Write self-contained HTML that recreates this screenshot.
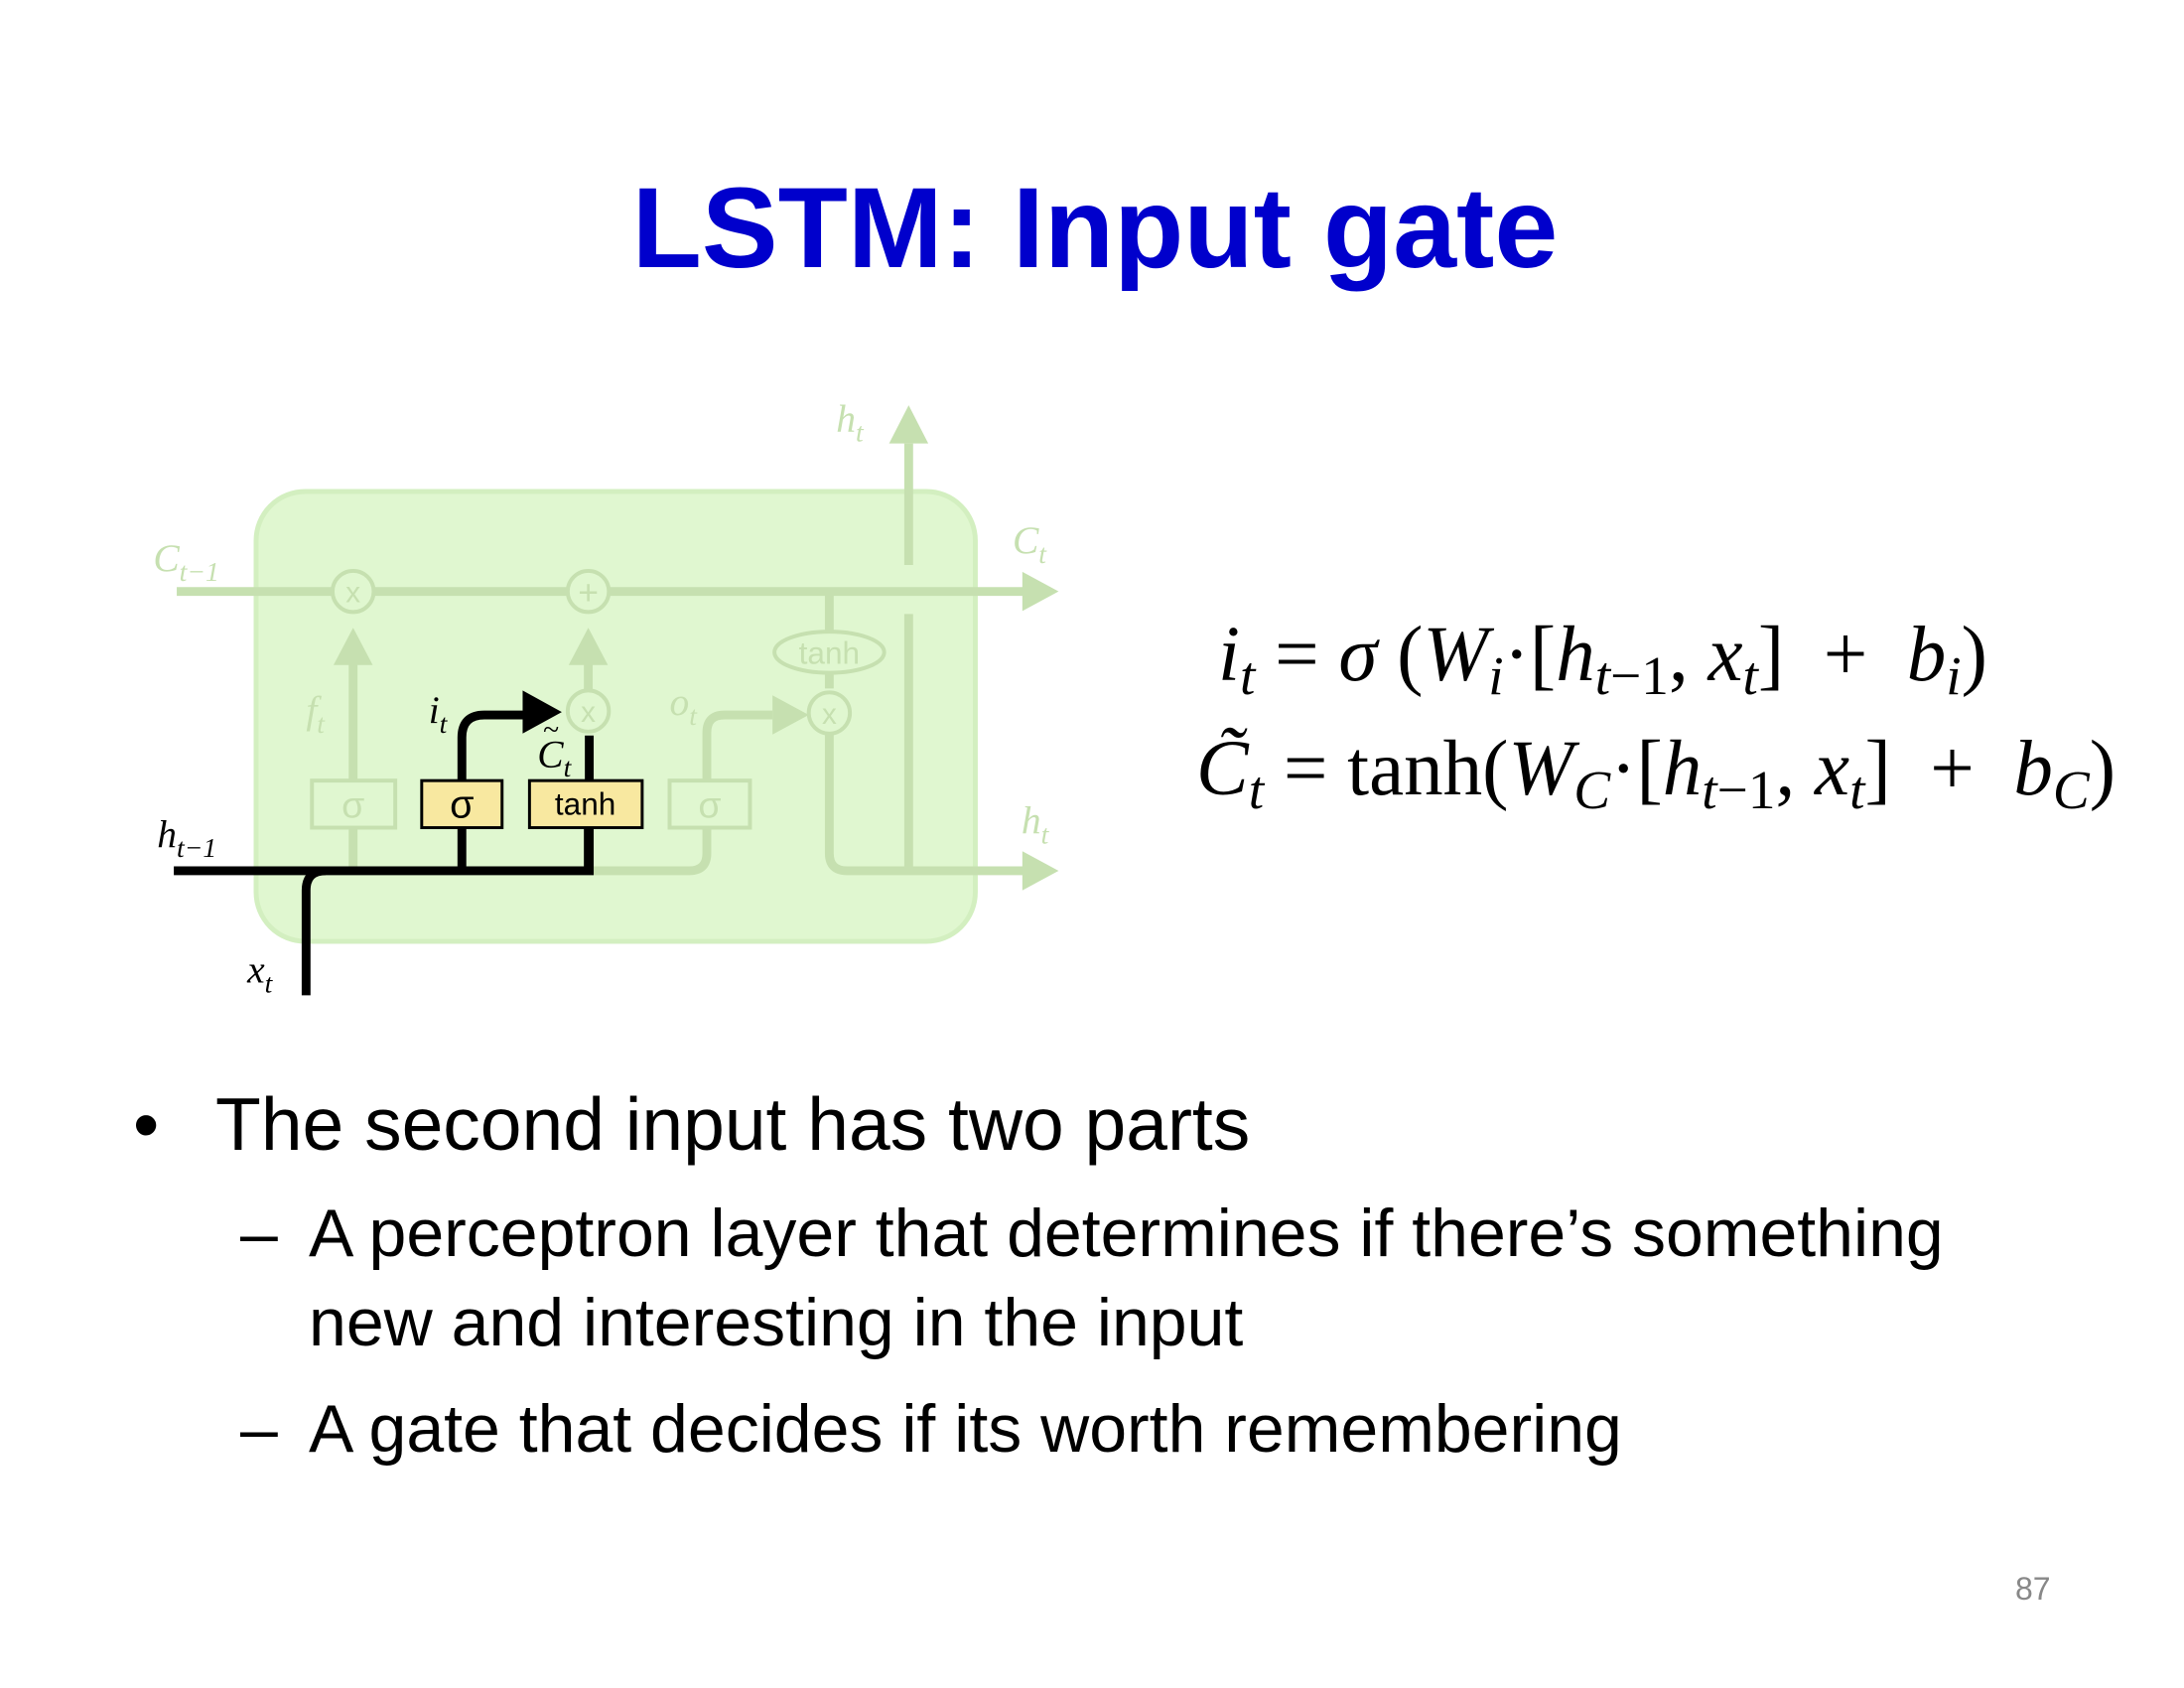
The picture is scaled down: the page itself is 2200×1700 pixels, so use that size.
<!DOCTYPE html>
<html><head><meta charset="utf-8"><style>
html,body{margin:0;padding:0;background:#fff;}
body{width:2200px;height:1700px;position:relative;overflow:hidden;font-family:"Liberation Sans",sans-serif;}
.t{position:absolute;white-space:nowrap;}
.title{left:0;width:2206px;text-align:center;top:173px;font-size:115px;font-weight:bold;color:#0000cc;line-height:1;}
.b{font-size:75px;color:#000;line-height:1;}
.s{font-size:68px;color:#000;line-height:1;}
.m{font-family:"Liberation Serif",serif;font-size:79px;line-height:1;color:#000;}
.m i{font-style:italic;}
.m sub{font-size:0.7em;vertical-align:-0.25em;line-height:0;}
</style></head><body>
<div class="t title">LSTM: Input gate</div>

<svg width="2200" height="1700" style="position:absolute;left:0;top:0" viewBox="0 0 2200 1700">
<g transform="translate(258,495) scale(0.987) translate(-258,-499)">
<rect x="258" y="499" width="734" height="459" rx="50" fill="#e0f7d0" stroke="#d3efc0" stroke-width="5"/>
<g stroke="#c6e0b0" stroke-width="9" fill="none">
<line x1="177" y1="601" x2="1045" y2="601"/>
<line x1="924" y1="574" x2="924" y2="450"/>
<line x1="843" y1="601" x2="843" y2="700"/>
<line x1="357" y1="794" x2="357" y2="670"/>
<line x1="597" y1="702" x2="597" y2="670"/>
<line x1="357" y1="842" x2="357" y2="886"/>
<path d="M598 886 H700 Q718 886 718 868 V842 M718 794 V745 Q718 727 736 727 H785"/>
<path d="M843 746 V868 Q843 886 861 886 H1045"/>
<line x1="924" y1="624" x2="924" y2="886"/>
<circle cx="357" cy="601" r="21" stroke-width="4" fill="#e0f7d0"/>
<circle cx="597" cy="601" r="21" stroke-width="4" fill="#e0f7d0"/>
<circle cx="597" cy="723" r="21" stroke-width="4" fill="#e0f7d0"/>
<circle cx="843" cy="725" r="21" stroke-width="4" fill="#e0f7d0"/>
<ellipse cx="843" cy="663" rx="56" ry="21" stroke-width="4" fill="#e0f7d0"/>
<rect x="315" y="794" width="85" height="48" stroke-width="4" fill="#e0f7d0"/>
<rect x="680" y="794" width="82" height="48" stroke-width="4" fill="#e0f7d0"/>
</g>
<g fill="#c6e0b0">
<polygon points="1077,601 1040,581 1040,621"/>
<polygon points="1077,886 1040,866 1040,906"/>
<polygon points="924,411 904,450 944,450"/>
<polygon points="357,638 337,676 377,676"/>
<polygon points="597,638 577,676 617,676"/>
<polygon points="822,727 785,707 785,747"/>
</g>
<g font-family="Liberation Sans,sans-serif" fill="#c6e0b0" text-anchor="middle">
<text x="357" y="612" font-size="30">x</text>
<text x="597" y="614" font-size="36">+</text>
<text x="597" y="734" font-size="30">x</text>
<text x="843" y="736" font-size="30">x</text>
<text x="843" y="675" font-size="32">tanh</text>
<text x="357" y="832" font-size="38">σ</text>
<text x="721" y="832" font-size="38">σ</text>
</g>
<g font-family="Liberation Serif,serif" font-style="italic" fill="#c6e0b0" font-size="40">
<text x="153" y="580">C<tspan font-size="28" dy="10">t−1</tspan></text>
<text x="1030" y="562">C<tspan font-size="28" dy="10">t</tspan></text>
<text x="850" y="438">h<tspan font-size="28" dy="10">t</tspan></text>
<text x="1039" y="848">h<tspan font-size="28" dy="10">t</tspan></text>
<text x="309" y="735">f<tspan font-size="28" dy="10">t</tspan></text>
<text x="680" y="727">o<tspan font-size="28" dy="10">t</tspan></text>
</g>
<g stroke="#000" stroke-width="9" fill="none">
<path d="M174 886 H598 V748"/>
<path d="M309 1013 V906 Q309 886 329 886"/>
<line x1="468" y1="886" x2="468" y2="842"/>
<line x1="597" y1="886" x2="597" y2="842"/>
<path d="M468 794 V750 Q468 727 491 727 H535"/>
</g>
<polygon points="570,724 530,702 530,746" fill="#000"/>
<rect x="427" y="794" width="82" height="48" fill="#f8e8a0" stroke="#000" stroke-width="3"/>
<rect x="537" y="794" width="115" height="48" fill="#f8e8a0" stroke="#000" stroke-width="3"/>
<text x="468" y="832" font-family="Liberation Sans,sans-serif" font-size="40" text-anchor="middle">σ</text>
<text x="594" y="829" font-family="Liberation Sans,sans-serif" font-size="32" text-anchor="middle">tanh</text>
<g font-family="Liberation Serif,serif" font-style="italic" fill="#000" font-size="40">
<text x="157" y="862">h<tspan font-size="28" dy="10">t−1</tspan></text>
<text x="249" y="1000">x<tspan font-size="28" dy="10">t</tspan></text>
<text x="434" y="735">i<tspan font-size="28" dy="10">t</tspan></text>
<text x="545" y="780">C<tspan font-size="28" dy="10">t</tspan></text>
<text x="551" y="752" font-style="normal" font-size="30">~</text>
</g>
</g>
</svg>

<div class="t m" style="left:1227px;top:620px;"><i>i</i><sub><i>t</i></sub> = <i>σ</i> (<i>W</i><sub><i>i</i></sub>·[<i>h</i><sub><i>t</i>−1</sub>, <i>x</i><sub><i>t</i></sub>] &nbsp;+ &nbsp;<i>b</i><sub><i>i</i></sub>)</div>
<div class="t m" style="left:1205px;top:735px;"><i>C̃</i><sub><i>t</i></sub> = tanh(<i>W</i><sub><i>C</i></sub>·[<i>h</i><sub><i>t</i>−1</sub>, <i>x</i><sub><i>t</i></sub>] &nbsp;+ &nbsp;<i>b</i><sub><i>C</i></sub>)</div>

<div class="t b" style="left:134px;top:1095px;">•</div>
<div class="t b" style="left:217px;top:1095px;">The second input has two parts</div>
<div class="t s" style="left:242px;top:1208px;">–</div>
<div class="t s" style="left:311px;top:1208px;">A perceptron layer that determines if there’s something</div>
<div class="t s" style="left:311px;top:1298px;">new and interesting in the input</div>
<div class="t s" style="left:242px;top:1405px;">–</div>
<div class="t s" style="left:311px;top:1405px;">A gate that decides if its worth remembering</div>
<div class="t" style="left:2030px;top:1582px;font-size:32px;color:#888;">87</div>
</body></html>
